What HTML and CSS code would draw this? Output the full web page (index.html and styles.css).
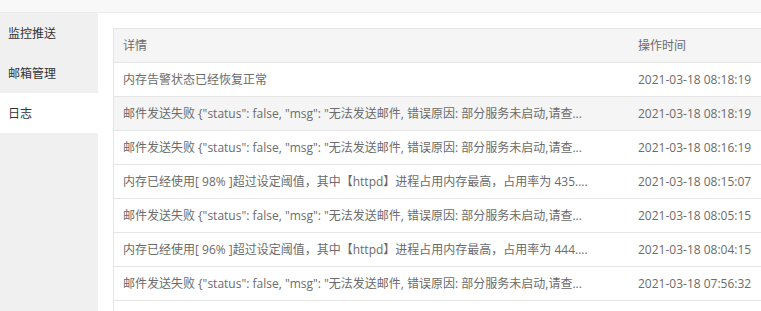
FILE: index.html
```html
<!DOCTYPE html>
<html lang="zh-CN">
<head>
<meta charset="utf-8">
<title>日志</title>
<link rel="stylesheet" href="styles.css">
</head>
<body>
<div class="topbar"></div>
<div class="layout">
  <nav class="sidebar">
    <div class="nav-item">监控推送</div>
    <div class="nav-item">邮箱管理</div>
    <div class="nav-item active">日志</div>
  </nav>
  <main class="content">
    <table class="log-table">
      <thead>
        <tr><th class="col-detail">详情</th><th class="col-time">操作时间</th></tr>
      </thead>
      <tbody>
        <tr><td>内存告警状态已经恢复正常</td><td>2021-03-18 08:18:19</td></tr>
        <tr class="hover"><td>邮件发送失败 {"status": false, "msg": "无法发送邮件, 错误原因: 部分服务未启动,请查...</td><td>2021-03-18 08:18:19</td></tr>
        <tr><td>邮件发送失败 {"status": false, "msg": "无法发送邮件, 错误原因: 部分服务未启动,请查...</td><td>2021-03-18 08:16:19</td></tr>
        <tr><td>内存已经使用[ 98% ]超过设定阈值，其中【httpd】进程占用内存最高，占用率为 435....</td><td>2021-03-18 08:15:07</td></tr>
        <tr><td>邮件发送失败 {"status": false, "msg": "无法发送邮件, 错误原因: 部分服务未启动,请查...</td><td>2021-03-18 08:05:15</td></tr>
        <tr><td>内存已经使用[ 96% ]超过设定阈值，其中【httpd】进程占用内存最高，占用率为 444....</td><td>2021-03-18 08:04:15</td></tr>
        <tr><td>邮件发送失败 {"status": false, "msg": "无法发送邮件, 错误原因: 部分服务未启动,请查...</td><td>2021-03-18 07:56:32</td></tr>
        <tr><td>&nbsp;</td><td>&nbsp;</td></tr>
      </tbody>
    </table>
  </main>
</div>
</body>
</html>
```
FILE: styles.css
```css
html, body {
  margin: 0;
  padding: 0;
  height: 100%;
  overflow: hidden;
  background: #fff;
  font-family: "Open Sans", "Noto Sans CJK SC", sans-serif;
  font-size: 12px;
  color: #666;
}
.topbar {
  height: 12px;
  background: #f8f8f8;
  border-bottom: 1px solid #ececec;
}
.layout {
  display: flex;
  height: calc(100% - 13px);
}
.sidebar {
  width: 98px;
  flex: none;
  background: #f0f0f0;
}
.nav-item {
  height: 40px;
  line-height: 41px;
  padding-left: 8px;
  color: #333;
  font-size: 12px;
}
.nav-item.active {
  background: #fff;
}
.content {
  flex: 1;
  padding: 15px 0 0 15px;
  overflow: hidden;
}
.log-table {
  border-collapse: collapse;
  width: 700px;
  table-layout: fixed;
  border-left: 1px solid #e6e6e6;
  border-top: 1px solid #e6e6e6;
}
.col-detail { width: 506px; }
.col-time { width: 194px; }
.log-table th,
.log-table td {
  height: 33px;
  padding: 0 0 0 9px;
  text-align: left;
  font-weight: normal;
  white-space: nowrap;
  overflow: hidden;
  border-bottom: 1px solid #e6e6e6;
  color: #6b6b6b;
  line-height: 20px;
}
.log-table thead th {
  background: #f5f5f5;
}
.log-table tr.hover td {
  background: #f5f5f5;
}
```
